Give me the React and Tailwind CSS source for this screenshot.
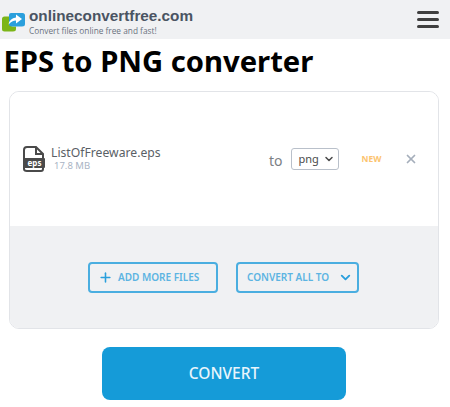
import { Plus, ChevronDown, X } from 'lucide-react'

const ubuntu = { fontFamily: '"Noto Sans", "Open Sans", sans-serif' }

function Logo() {
  return (
    <svg width="25" height="24" viewBox="0 0 25 24" className="mr-[3px] shrink-0">
      <path d="M1 11 Q1 8.500 3.500 8.500 H10 V17 Q10 18.500 12 18.500 H15 V21 Q15 23.500 12 23.500 H3.500 Q1 23.500 1 21 Z" fill="#7cb518" />
      <path d="M8 7 Q8 5 10 5 H21.500 Q24 5 24 7.500 V16 Q24 18.500 21 18.500 H11 Q8 18.500 8 16 Z" fill="#2a9fdc" />
      <path d="M7.500 16.500 Q8.500 10.500 15 9.500 V6.500 L21 11 L15 15.500 V12.500 Q11 12.500 7.500 16.500 Z" fill="#fff" />
    </svg>
  )
}

function FileIcon() {
  return (
    <svg width="24" height="28" viewBox="0 0 24 28" className="shrink-0">
      <path d="M2 5 Q2 2 5 2 H14 L21 9 V24 Q21 26 19 26 H5 Q2 26 2 24 Z" fill="none" stroke="#4a4a4a" strokeWidth="2" />
      <path d="M14 2 V9 H21" fill="none" stroke="#4a4a4a" strokeWidth="2" />
      <rect x="2" y="13" width="21" height="10" rx="1" fill="#4a4a4a" />
      <text x="12.500" y="21" textAnchor="middle" fontSize="8" fontWeight="700" fill="#fff" fontFamily="Noto Sans, sans-serif">eps</text>
    </svg>
  )
}

export default function App() {
  return (
    <div className="w-[450px] h-[407px] bg-white overflow-hidden" style={ubuntu}>
      {/* header */}
      <div className="h-[39px] bg-[#f0f1f3] flex items-center justify-between pl-[1px] pr-[11px]">
        <div className="flex items-center">
          <Logo />
          <div className="flex flex-col pt-[3px]">
            <span className="text-[15.300px] leading-[18px] font-bold text-[#4a5462] font-['Liberation_Sans']">onlineconvertfree.com</span>
            <span className="text-[8.300px] leading-[11px] text-[#6b7280] font-['Open_Sans']">Convert files online free and fast!</span>
          </div>
        </div>
        <div className="flex flex-col gap-[4px]">
          <div className="w-[22px] h-[3px] bg-[#3f3f3f] rounded-sm" />
          <div className="w-[22px] h-[3px] bg-[#3f3f3f] rounded-sm" />
          <div className="w-[22px] h-[3px] bg-[#3f3f3f] rounded-sm" />
        </div>
      </div>

      <h1 className="h-[44px] pl-[3.500px] text-[29.200px] leading-[44px] font-bold text-black whitespace-nowrap">EPS to PNG converter</h1>

      {/* card */}
      <div className="mt-[8px] mx-[9px] w-[430px] h-[238px] border border-[#e2e4e8] rounded-[10px] overflow-hidden flex flex-col">
        <div className="h-[134px] bg-white flex items-center pl-[12px] pr-[20px]">
          <FileIcon />
          <div className="ml-[5px] flex flex-col w-[218px] mb-[2px]">
            <span className="text-[12.200px] leading-[15px] text-[#5a5f66]">ListOfFreeware.eps</span>
            <span className="pl-[3px] text-[9.500px] leading-[11px] text-[#a9b4c4]">17.8 MB</span>
          </div>
          <span className="text-[14px] text-[#7b7f85] pt-[2px]">to</span>
          <div className="ml-[8px] w-[48px] h-[22px] border border-[#b9c0ca] rounded-[3px] flex items-center justify-between pl-[7px] pr-[3px]">
            <span className="text-[11px] text-[#4a4a4a]">png</span>
            <ChevronDown size={12} strokeWidth={3} color="#4a4a4a" />
          </div>
          <span className="ml-[23px] text-[8.500px] font-bold text-[#fcc46f]">NEW</span>
          <X size={14} strokeWidth={3} color="#a5aebb" className="ml-auto" />
        </div>
        <div className="flex-1 bg-[#f0f1f3] flex justify-center items-start pt-[36px] pr-[1px] gap-[18px]">
          <div className="w-[130px] h-[31px] border-2 border-[#4aaee0] rounded-[4px] flex items-center pl-[8px] gap-[5px]">
            <Plus size={15} strokeWidth={2.500} color="#2a9fdc" />
            <span className="text-[10px] font-semibold text-[#5cb4e2]">ADD MORE FILES</span>
          </div>
          <div className="w-[123px] h-[31px] border-2 border-[#4aaee0] rounded-[4px] flex items-center justify-between pl-[9px] pr-[4px]">
            <span className="text-[10px] font-semibold text-[#5cb4e2]">CONVERT ALL TO</span>
            <ChevronDown size={15} strokeWidth={3} color="#2a9fdc" />
          </div>
        </div>
      </div>

      <div className="mt-[18px] ml-[102px] w-[244px] h-[53px] bg-[#159bd8] rounded-[8px] flex items-center justify-center text-[15.500px] font-medium text-[#e8f5fc]">
        CONVERT
      </div>
    </div>
  )
}
